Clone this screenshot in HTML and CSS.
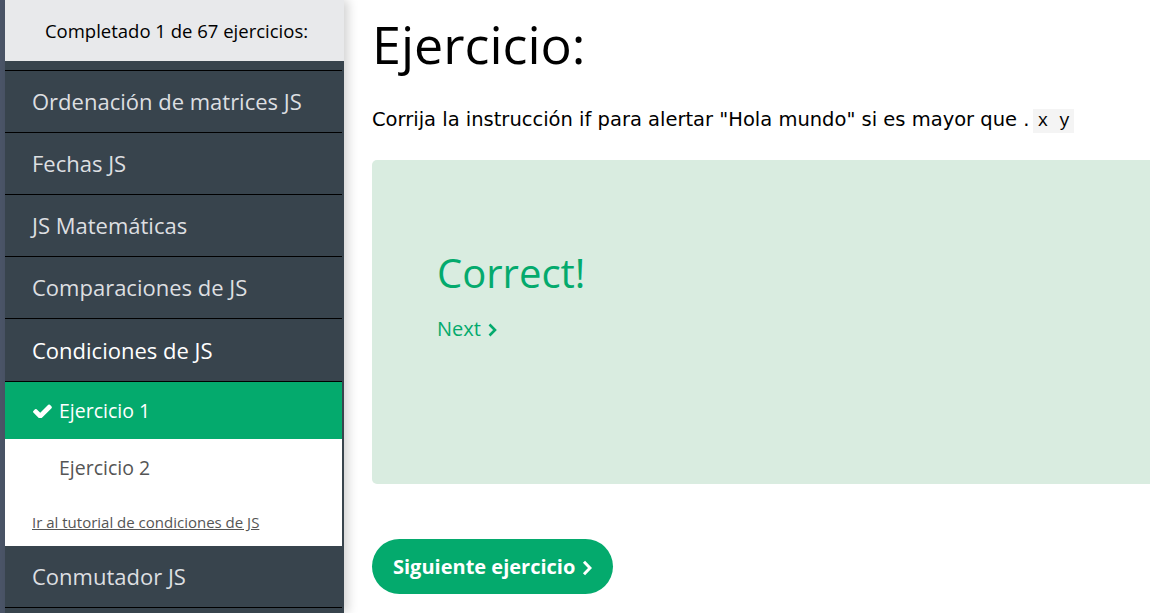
FILE: index.html
```html
<!DOCTYPE html>
<html lang="es">
<head>
<meta charset="utf-8">
<link rel="stylesheet" href="styles.css">
</head>
<body>
<div class="page">
  <aside class="sidebar">
    <div class="progress">Completado 1 de 67 ejercicios:</div>
    <nav class="menu">
      <div class="cat">Ordenación de matrices JS</div>
      <div class="cat">Fechas JS</div>
      <div class="cat">JS Matemáticas</div>
      <div class="cat">Comparaciones de JS</div>
      <div class="cat open">Condiciones de JS</div>
      <div class="sub">
        <div class="ex done"><svg class="check" viewBox="120 300 1560 1140" width="19" height="14"><path fill="#fff" d="M1671 566q0 40-28 68l-724 724-136 136q-28 28-68 28t-68-28l-136-136-362-362q-28-28-28-68t28-68l136-136q28-28 68-28t68 28l294 295 656-657q28-28 68-28t68 28l136 136q28 28 28 68z"/></svg>Ejercicio 1</div>
        <div class="ex">Ejercicio 2</div>
        <a class="tut" href="#">Ir al tutorial de condiciones de JS</a>
      </div>
      <div class="cat last">Conmutador JS</div>
    </nav>
  </aside>
  <main class="main">
    <h1 class="title">Ejercicio:</h1>
    <p class="task">Corrija la instrucción if para alertar "Hola mundo" si es mayor que .<code class="code">x y</code></p>
    <div class="result">
      <div class="correct">Correct!</div>
      <a class="next" href="#">Next<svg class="chev" viewBox="0 0 9 14" width="9" height="14"><path d="M1.5 1.5 L7 7 L1.5 12.5" fill="none" stroke="#04aa6d" stroke-width="2.6"/></svg></a>
    </div>
    <a class="btn" href="#">Siguiente ejercicio<svg class="chev" viewBox="0 0 10 16" width="10" height="16"><path d="M2 1.8 L8 8 L2 14.2" fill="none" stroke="#fff" stroke-width="3"/></svg></a>
  </main>
</div>
</body>
</html>
```
FILE: styles.css
```css
* { box-sizing: border-box; }
html, body { margin: 0; padding: 0; }
body {
  width: 1150px;
  height: 613px;
  overflow: hidden;
  background: #fff;
  font-family: "Segoe UI", "Open Sans", sans-serif;
}
.page {
  display: flex;
  height: 613px;
  border-left: 5px solid #4b5568;
}
.sidebar {
  width: 339px;
  flex: none;
  background: #38444d;
  box-shadow: 4px 0 10px rgba(0,0,0,0.18);
  position: relative;
  z-index: 1;
}
.progress {
  height: 61px;
  background: #e8e9eb;
  color: #000;
  font-size: 18.5px;
  display: flex;
  align-items: center;
  justify-content: center;
  padding-left: 4px;
}
.menu {
  padding-top: 9px;
  padding-right: 2px;
}
.cat {
  height: 62px;
  border-top: 1px solid #000;
  color: #dddfe1;
  font-size: 22px;
  padding-left: 27px;
  display: flex;
  align-items: center;
  padding-bottom: 1px;
}
.cat.open { color: #fff; height: 63px; }
.sub { background: #fff; border-top: 1px solid #000; }
.ex {
  height: 57px;
  display: flex;
  align-items: center;
  padding-left: 54px;
  font-size: 19.5px;
  color: #555;
}
.ex.done {
  background: #04aa6d;
  color: #fff;
  padding-left: 28px;
}
.check { margin-right: 7px; }
.tut {
  display: block;
  padding: 16px 0 14px 27px;
  font-size: 15px;
  color: #555;
  text-decoration: underline;
}
.cat.last { border-top: none; height: 62px; border-bottom: 1px solid #000; }
.main {
  flex: 1;
  padding-left: 28px;
  min-width: 0;
}
.title {
  margin: 12px 0 0 0;
  font-weight: 400;
  font-size: 52px;
  line-height: 64px;
  color: #000;
}
.task {
  margin: 32px 0 0 0;
  font-family: "DejaVu Sans", Verdana, sans-serif;
  font-size: 19.5px;
  line-height: 24px;
  color: #000;
  white-space: nowrap;
}
.code {
  font-family: "Liberation Mono", monospace;
  font-size: 18px;
  background: #f4f4f4;
  padding: 2px 4px;
  margin-left: 4px;
}
.result {
  margin-top: 27px;
  width: 800px;
  height: 324px;
  background: #d9ece0;
  border-radius: 5px;
  padding: 87px 0 0 65px;
}
.correct {
  font-size: 40px;
  color: #04aa6d;
  line-height: 52px;
}
.next {
  display: inline-flex;
  align-items: center;
  margin-top: 16px;
  font-size: 20px;
  color: #04aa6d;
  text-decoration: none;
}
.next .chev { margin-left: 7px; margin-top: 2px; }
.btn {
  display: inline-flex;
  align-items: center;
  margin-top: 55px;
  height: 55px;
  padding: 0 21px;
  border-radius: 28px;
  background: #04aa6d;
  color: #fff;
  font-family: "Source Sans Pro", "Open Sans", sans-serif;
  font-weight: 700;
  font-size: 20px;
  text-decoration: none;
}
.btn .chev { margin-left: 7px; margin-top: 2px; }
```
